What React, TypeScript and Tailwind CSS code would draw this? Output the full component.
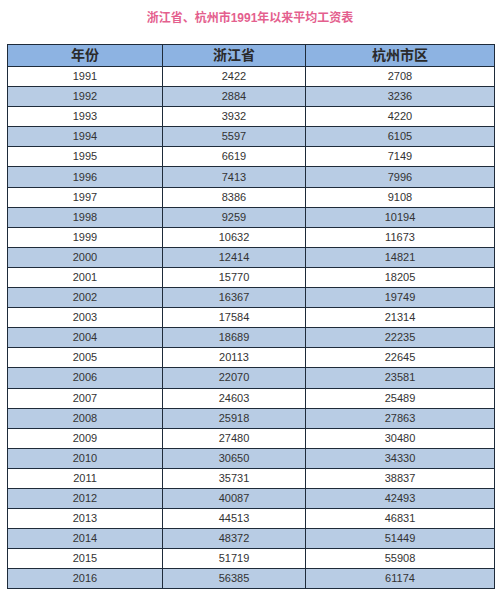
const rows: [string, string, string][] = [
  ["1991", "2422", "2708"],
  ["1992", "2884", "3236"],
  ["1993", "3932", "4220"],
  ["1994", "5597", "6105"],
  ["1995", "6619", "7149"],
  ["1996", "7413", "7996"],
  ["1997", "8386", "9108"],
  ["1998", "9259", "10194"],
  ["1999", "10632", "11673"],
  ["2000", "12414", "14821"],
  ["2001", "15770", "18205"],
  ["2002", "16367", "19749"],
  ["2003", "17584", "21314"],
  ["2004", "18689", "22235"],
  ["2005", "20113", "22645"],
  ["2006", "22070", "23581"],
  ["2007", "24603", "25489"],
  ["2008", "25918", "27863"],
  ["2009", "27480", "30480"],
  ["2010", "30650", "34330"],
  ["2011", "35731", "38837"],
  ["2012", "40087", "42493"],
  ["2013", "44513", "46831"],
  ["2014", "48372", "51449"],
  ["2015", "51719", "55908"],
  ["2016", "56385", "61174"],
];

export default function App() {
  return (
    <div className="w-[500px] h-[595px] bg-white overflow-hidden font-['Liberation_Sans','Noto_Sans_CJK_SC',sans-serif]">
      <div className="h-[44px] pt-[9px] text-center text-[12px] font-bold text-[#e4608e]">
        浙江省、杭州市1991年以来平均工资表
      </div>
      <table className="ml-[7px] w-[487px] border-collapse table-fixed text-[#333]">
        <colgroup>
          <col className="w-[155px]" />
          <col className="w-[143px]" />
          <col className="w-[189px]" />
        </colgroup>
        <thead>
          <tr className="h-[21px] bg-[#8db3e2] text-[14px] font-bold text-[#2a2a2a]">
            <th className="border border-[#1e2b3a] p-0">年份</th>
            <th className="border border-[#1e2b3a] p-0">浙江省</th>
            <th className="border border-[#1e2b3a] p-0">杭州市区</th>
          </tr>
        </thead>
        <tbody>
          {rows.map((r, i) => (
            <tr key={r[0]} className={i % 2 === 1 ? "h-[20.1px] bg-[#b8cce4]" : "h-[20.1px] bg-white"}>
              {r.map((c, j) => (
                <td key={j} className="border border-[#1e2b3a] p-0 text-center text-[11px] leading-none">
                  {c}
                </td>
              ))}
            </tr>
          ))}
        </tbody>
      </table>
    </div>
  );
}
